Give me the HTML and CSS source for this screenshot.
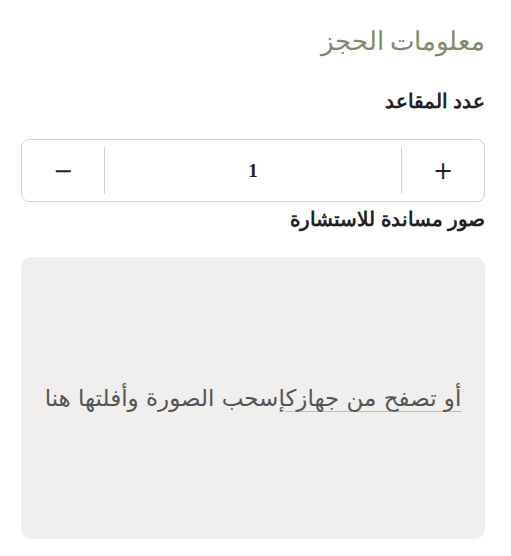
FILE: index.html
```html
<!DOCTYPE html>
<html lang="ar" dir="rtl">
<head>
<meta charset="utf-8">
<link rel="stylesheet" href="styles.css">
</head>
<body>
<section class="booking">
  <h2 class="title">معلومات الحجز</h2>
  <label class="field-label">عدد المقاعد</label>
  <div class="stepper">
    <button class="step-btn" type="button">+</button>
    <div class="step-value">1</div>
    <button class="step-btn" type="button">−</button>
  </div>
  <label class="field-label tight">صور مساندة للاستشارة</label>
  <div class="dropzone">
    <p class="drop-text"><span class="browse">أو تصفح من جهازك</span><span>إسحب الصورة وأفلتها هنا</span></p>
  </div>
</section>
</body>
</html>
```

FILE: styles.css
```css
html, body {
  margin: 0;
  padding: 0;
  background: #ffffff;
}
.booking {
  padding: 24px 26px 0 21px;
  display: flex;
  flex-direction: column;
  font-family: "Liberation Sans", Arial, sans-serif;
  color: #222;
}
.title {
  margin: 0;
  font-family: "Liberation Serif", serif;
  font-weight: normal;
  font-size: 26px;
  line-height: 36px;
  color: #7b8b6b;
}
.field-label {
  display: block;
  font-weight: bold;
  font-size: 19.5px;
  line-height: 22px;
  margin-top: 30px;
  color: #222;
}
.stepper {
  margin-top: 27px;
  height: 63px;
  border: 1px solid #d3d3d3;
  border-radius: 8px;
  display: flex;
  align-items: center;
  padding: 7px 0;
  box-sizing: border-box;
}
.step-btn {
  width: 82px;
  height: 100%;
  border: 0;
  background: transparent;
  font-family: "DejaVu Sans", sans-serif;
  font-size: 24px;
  color: #222;
  padding: 0;
}
.step-value {
  flex: 1;
  height: 100%;
  border-left: 1px solid #d3d3d3;
  border-right: 1px solid #d3d3d3;
  display: flex;
  align-items: center;
  justify-content: center;
  font-family: "Liberation Serif", serif;
  font-weight: bold;
  font-size: 19px;
  color: #222;
}
.field-label.tight {
  margin-top: 6px;
}
.dropzone {
  margin-top: 27px;
  height: 282px;
  background: #f0efed;
  border-radius: 10px;
  display: flex;
  align-items: center;
  justify-content: center;
}
.drop-text {
  margin: 0;
  font-family: "DejaVu Sans", sans-serif;
  font-size: 23px;
  color: #555;
}
.browse {
  text-decoration: underline solid #bdbdbd 1px;
  text-underline-offset: 5px;
}
```
